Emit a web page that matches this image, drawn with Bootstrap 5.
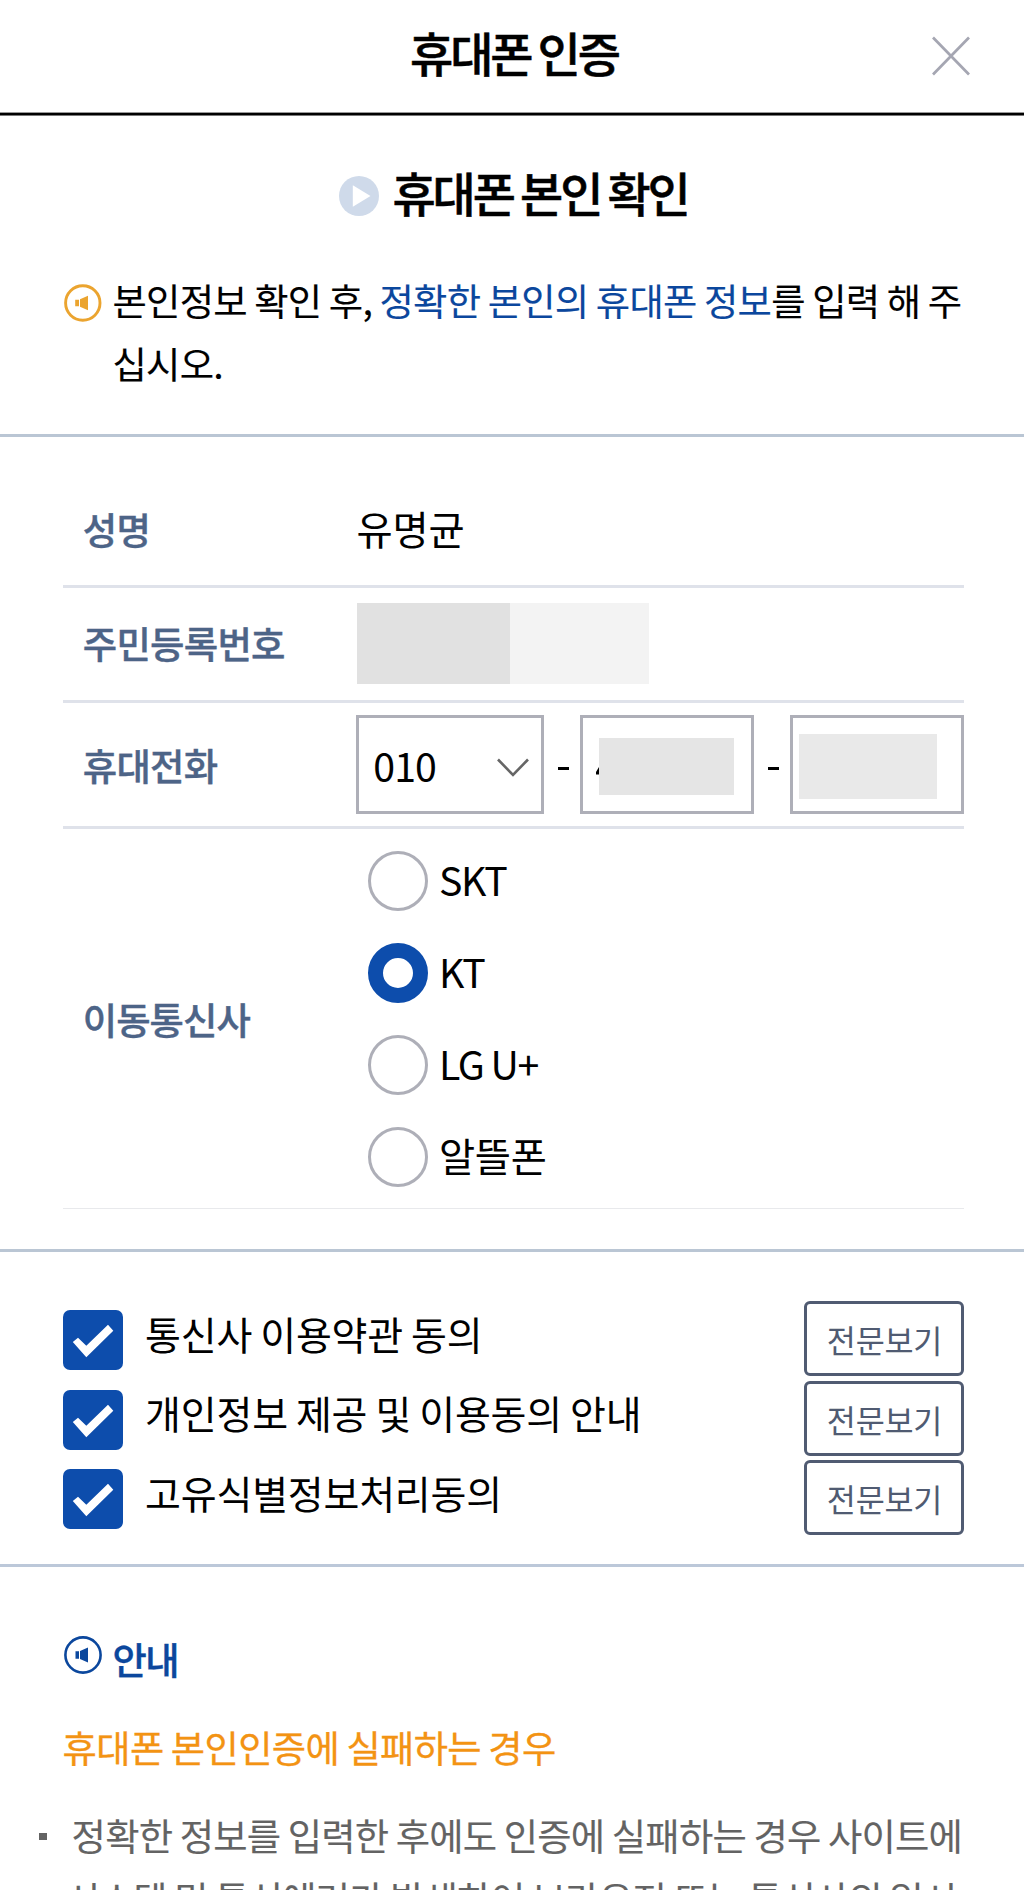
<!DOCTYPE html>
<html lang="ko">
<head>
<meta charset="utf-8">
<meta name="viewport" content="width=device-width, initial-scale=1">
<title>휴대폰 인증</title>
<link href="https://cdn.jsdelivr.net/npm/bootstrap@5.3.0/dist/css/bootstrap.min.css" rel="stylesheet">
<style>
body{font-family:"Noto Sans CJK KR","Noto Sans",sans-serif;color:#000;background:#fff;height:1890px;overflow:hidden}
svg{display:block;flex:none}
.app-top{height:115px;padding:22px 0 0 4px;border-bottom:2px solid #000;box-shadow:0 1px #777,inset 0 -1px #999}
.head-txt{font-size:47px;letter-spacing:-3.08px;word-spacing:-3px;line-height:60px;font-weight:500;margin:0;-webkit-text-stroke:.5px currentColor}
.close-btn{top:35px;right:53px;width:40px;height:42px;border:0;padding:0;background:none}
.intro{height:322px;padding-top:46.5px;border-bottom:3px solid #bac6d4}
.intro-head{gap:13.2px;padding-left:3px}
.play{margin-top:9px}
.note{padding:47px 0 0 64px;gap:10.5px}
.note svg{margin-top:15px}
.copy{font-size:37.3px;letter-spacing:-.73px;word-spacing:-2.3px;line-height:63.4px;margin:0;white-space:nowrap;-webkit-text-stroke:.15px currentColor}
.blue{color:#0b479d}
.fields{height:815px;padding:33px 60px 0 63px;border-bottom:3px solid #bac6d4}
.field{border-bottom:3px solid #dfe2ea}
.r-name{height:118px}
.r-num{height:115px;padding-bottom:2px}
.r-tel{height:126px}
.r-car{height:380px;border-bottom:1px solid #e8e9ec}
.lbl{width:293.5px;padding-left:19.8px;font-size:37.4px;letter-spacing:-.75px;line-height:60px;color:#4d6487;font-weight:500;-webkit-text-stroke:.4px currentColor}
.r-name .lbl{padding-top:2px}
.r-car .lbl{letter-spacing:-1px}
.val{font-size:39.3px;letter-spacing:-.2px;line-height:60px}
.num-a{width:153px;height:81px;background:#e1e1e1}
.num-b{width:139px;height:81px;background:#f3f3f3}
.box{height:99px;border:3px solid #aeafb8;background:#fff}
.box-sel{width:188px;padding:0 12px 0 14px;font-size:39.3px;letter-spacing:-1px;line-height:60px}
.box-sel svg{margin-top:7px}
.box-in{width:174px}
.dash{width:36px}
.dash i{display:block;width:10.5px;height:3px;margin:8px 0 0 14px;background:#000}
.mask-a{width:135px;height:57px;margin:20px 0 0 3px;background:#e5e5e5}
.mask-b{width:138px;height:65px;margin:16px 0 0 6px;background:#e9e9e9}
.digit{margin:49px 0 0 13px}
.opt{height:92px;margin-left:11.5px;gap:11px;font-size:39.3px;line-height:60px;letter-spacing:-1.4px;word-spacing:-2.6px}
.opt span{margin-top:-3px}
.opt .ko{letter-spacing:-.3px}
.dot{width:60px;height:60px;border:3px solid #aeafb8;border-radius:50%}
.dot-on{border:15px solid #0d4dac}
.agree{height:315px;padding:49px 60px 0 63px;border-bottom:3px solid #bcc8d9}
.agree-row{height:79.5px}
.tick{width:59.5px;height:60px;margin-top:9.2px;border-radius:7px;background:#0d4dac}
.agree-txt{font-size:39px;letter-spacing:-.2px;word-spacing:-2.6px;line-height:60px;margin:1.8px 0 0 22.6px}
.view{width:160px;height:75px;padding:1px 0 0 1px;border:3px solid #505b72;border-radius:6px;background:#fff;color:#505b72;font-size:31.6px;letter-spacing:-.2px;line-height:40px}
.guide{padding:66.7px 0 0 63.5px}
.guide-head{gap:11px;color:#0b479d}
.guide-head svg{margin-top:2.3px}
.guide-head h3{font-size:37.3px;letter-spacing:-1.5px;line-height:50px;font-weight:500;margin:0;-webkit-text-stroke:.4px currentColor}
.guide h4{font-size:37.3px;letter-spacing:-.68px;word-spacing:-2.4px;line-height:50px;font-weight:400;color:#f39313;margin:38.3px 0 31.7px -.9px;-webkit-text-stroke:.3px currentColor}
.tip{margin-left:-24.5px;color:#636363}
.tip i{width:8px;height:7px;margin-top:29.5px;margin-right:19.1px;background:#636363}
.tip .copy{letter-spacing:-.76px;text-indent:5.5px}
</style>
</head>
<body>
<header class="app-top position-relative d-flex justify-content-center align-items-start">
  <h1 class="head-txt">휴대폰 인증</h1>
  <button class="close-btn position-absolute" aria-label="닫기">
    <svg width="40" height="42" viewBox="0 0 40 42" fill="none" stroke="#a5a6b2" stroke-width="2.700"><path d="M2 2.500L38 39.500M38 2.500L2 39.500"/></svg>
  </button>
</header>

<section class="intro">
  <div class="intro-head d-flex justify-content-center align-items-center">
    <svg class="play" width="40" height="40" viewBox="0 0 40 40"><circle cx="20" cy="20" r="20" fill="#cfdaea"/><path d="M13.800 9.200L31.500 20L13.800 30.800Z" fill="#fff"/></svg>
    <h2 class="head-txt">휴대폰 본인 확인</h2>
  </div>
  <div class="note d-flex align-items-start">
    <svg width="38" height="38" viewBox="0 0 38 38"><circle cx="18.800" cy="19" r="17.200" fill="none" stroke="#eba42f" stroke-width="2.900"/><path d="M11.200 15.800h3.800v6.400h-3.800zM16 15.300L24 11.800V26.200L16 22.700Z" fill="#eba42f"/></svg>
    <p class="copy">본인정보 확인 후, <span class="blue">정확한 본인의 휴대폰 정보</span>를 입력 해 주<br>십시오.</p>
  </div>
</section>

<section class="fields">
  <div class="field r-name d-flex align-items-center">
    <div class="lbl">성명</div><div class="val">유명균</div>
  </div>
  <div class="field r-num d-flex align-items-center">
    <div class="lbl">주민등록번호</div><div class="num-a"></div><div class="num-b"></div>
  </div>
  <div class="field r-tel d-flex align-items-center">
    <div class="lbl">휴대전화</div>
    <div class="box box-sel d-flex align-items-center justify-content-between">010
      <svg width="32" height="20" viewBox="0 0 32 20" fill="none" stroke="#666" stroke-width="2.600"><path d="M1 1.500L16 17L31 1.500"/></svg>
    </div>
    <div class="dash"><i></i></div>
    <div class="box box-in d-flex align-items-start">
      <svg class="digit" width="3" height="8" viewBox="0 0 3 8"><path d="M3 0V7.500H0V5Z"/></svg>
      <div class="mask-a ms-0"></div>
    </div>
    <div class="dash"><i></i></div>
    <div class="box box-in"><div class="mask-b"></div></div>
  </div>
  <div class="field r-car d-flex align-items-center">
    <div class="lbl">이동통신사</div>
    <div>
      <div class="opt d-flex align-items-center"><div class="dot"></div><span>SKT</span></div>
      <div class="opt d-flex align-items-center"><div class="dot dot-on"></div><span>KT</span></div>
      <div class="opt d-flex align-items-center"><div class="dot"></div><span>LG U+</span></div>
      <div class="opt d-flex align-items-center"><div class="dot"></div><span class="ko">알뜰폰</span></div>
    </div>
  </div>
</section>

<section class="agree">
  <div class="agree-row d-flex align-items-start">
    <div class="tick"><svg width="60" height="60" viewBox="0 0 60 60"><path d="M9.800 32L15 27.800L23.300 35.800L45 14.800L50.300 20.800L23.300 47.200Z" fill="#fff"/></svg></div>
    <div class="agree-txt">통신사 이용약관 동의</div>
    <button class="view ms-auto">전문보기</button>
  </div>
  <div class="agree-row d-flex align-items-start">
    <div class="tick"><svg width="60" height="60" viewBox="0 0 60 60"><path d="M9.800 32L15 27.800L23.300 35.800L45 14.800L50.300 20.800L23.300 47.200Z" fill="#fff"/></svg></div>
    <div class="agree-txt">개인정보 제공 및 이용동의 안내</div>
    <button class="view ms-auto">전문보기</button>
  </div>
  <div class="agree-row d-flex align-items-start">
    <div class="tick"><svg width="60" height="60" viewBox="0 0 60 60"><path d="M9.800 32L15 27.800L23.300 35.800L45 14.800L50.300 20.800L23.300 47.200Z" fill="#fff"/></svg></div>
    <div class="agree-txt">고유식별정보처리동의</div>
    <button class="view ms-auto">전문보기</button>
  </div>
</section>

<section class="guide">
  <div class="guide-head d-flex align-items-start">
    <svg width="38" height="38" viewBox="0 0 38 38"><circle cx="19" cy="19" r="17.600" fill="none" stroke="#0b479d" stroke-width="2.600"/><path d="M11.500 15.300h3.500v7.400h-3.500zM16 15L24 11.500V26.500L16 23Z" fill="#0b479d"/></svg>
    <h3>안내</h3>
  </div>
  <h4>휴대폰 본인인증에 실패하는 경우</h4>
  <div class="tip d-flex align-items-start"><i></i><p class="copy">정확한 정보를 입력한 후에도 인증에 실패하는 경우 사이트에<br>시스템 및 통신에러가 발생하여 브라우저 또는 통신사의 일시</p></div>
</section>
<script src="https://cdn.jsdelivr.net/npm/bootstrap@5.3.0/dist/js/bootstrap.bundle.min.js"></script>
</body>
</html>
